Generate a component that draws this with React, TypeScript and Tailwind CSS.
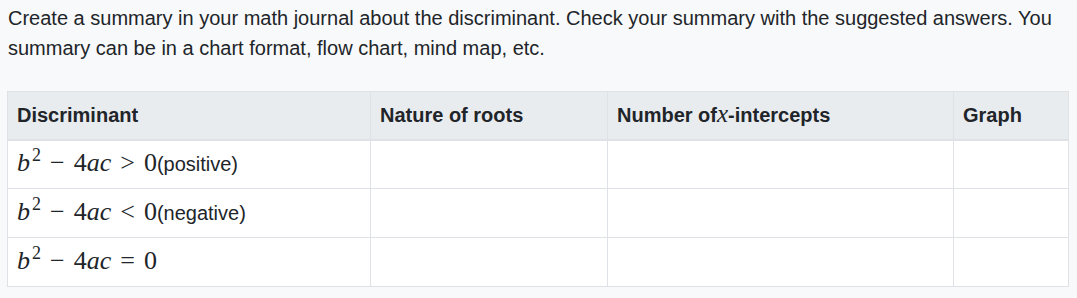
const rows = [
  { op: ">", note: "(positive)" },
  { op: "<", note: "(negative)" },
  { op: "=", note: "" },
];

const Math = ({ op }: { op: string }) => (
  <span className="font-['Liberation_Serif',serif] text-[26px] leading-none whitespace-nowrap">
    <i>b</i>
    <span className="text-[18px] relative -top-[10px] ml-[2px]">2</span>
    <span className="mx-[9px]">−</span>
    4<i>ac</i>
    <span className="mx-[9px]">{op}</span>
    0
  </span>
);

export default function App() {
  return (
    <div className="min-h-screen bg-[#f8f9fa] text-[#212529] font-['Liberation_Sans',Arial,sans-serif] pl-[7px] pr-[9px] pt-[3px]">
      <p className="text-[20px] leading-[30px] pl-[1px] mb-[28px]">
        Create a summary in your math journal about the discriminant. Check your summary with the suggested answers. You
        summary can be in a chart format, flow chart, mind map, etc.
      </p>
      <table className="w-[1061px] border-collapse table-fixed bg-white">
        <colgroup>
          <col className="w-[363px]" />
          <col className="w-[237px]" />
          <col className="w-[346px]" />
          <col className="w-[115px]" />
        </colgroup>
        <thead>
          <tr className="bg-[#e9ecef] h-[48px]">
            <th className="border border-[#dee2e6] border-b-2 px-[9px] text-left text-[20px] font-bold">Discriminant</th>
            <th className="border border-[#dee2e6] border-b-2 px-[9px] text-left text-[20px] font-bold">Nature of roots</th>
            <th className="border border-[#dee2e6] border-b-2 px-[9px] text-left text-[20px] font-bold whitespace-nowrap">
              Number of
              <i className="font-['Liberation_Serif',serif] text-[25px] leading-none font-normal">x</i>
              -intercepts
            </th>
            <th className="border border-[#dee2e6] border-b-2 px-[9px] text-left text-[20px] font-bold">Graph</th>
          </tr>
        </thead>
        <tbody>
          {rows.map((r) => (
            <tr key={r.op} className="h-[49px]">
              <td className="border border-[#dee2e6] px-[9px] text-[20px]">
                <Math op={r.op} />
                {r.note}
              </td>
              <td className="border border-[#dee2e6]" />
              <td className="border border-[#dee2e6]" />
              <td className="border border-[#dee2e6]" />
            </tr>
          ))}
        </tbody>
      </table>
    </div>
  );
}
